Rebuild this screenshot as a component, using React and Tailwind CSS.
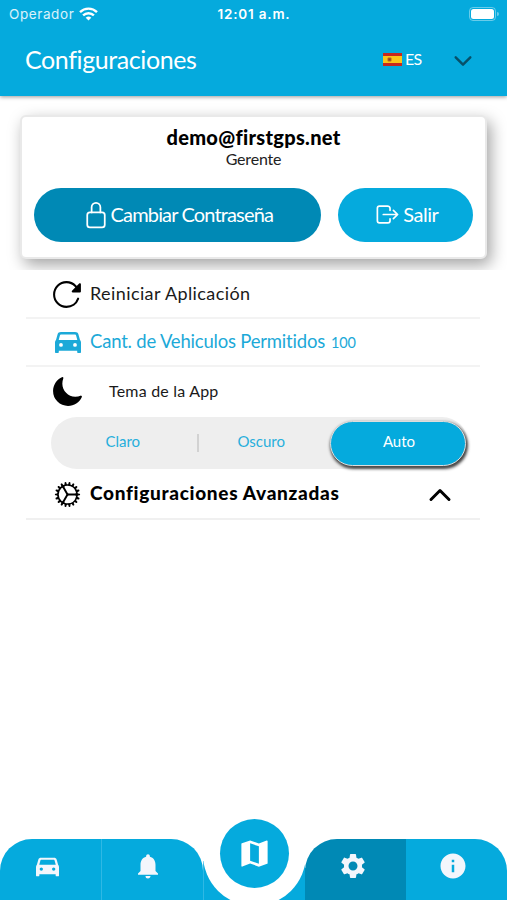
import { useState } from 'react'
import { IoLockClosedOutline, IoLogOutOutline, IoReload, IoMoon, IoCogOutline, IoChevronUp, IoChevronDown } from 'react-icons/io5'
import { MdNotifications, MdMap, MdSettings, MdInfo } from 'react-icons/md'

const CarIcon = ({ className }) => (
  <svg className={className} viewBox="0 0 26 21" fill="currentColor" fillRule="evenodd">
    <path d="M6 0h14c1.9 0 3 .7 3.4 2.3L25 8c.6.8 1 1.400 1 2.500V20c0 .6-.4 1-1 1h-1.800c-.6 0-1-.4-1-1v-1.200H3.800V20c0 .6-.4 1-1 1H1c-.6 0-1-.4-1-1v-9.500C0 9.400.4 8.800 1 8l1.600-5.700C3 .7 4.100 0 6 0zM6.400 2.400c-.9 0-1.300.3-1.500 1L3.700 7.900h18.600l-1.200-4.500c-.2-.7-.6-1-1.500-1zM6 11a1.900 1.900 0 1 0 0 3.800A1.900 1.900 0 0 0 6 11zm14 0a1.900 1.900 0 1 0 0 3.800 1.900 1.900 0 0 0 0-3.800z" />
  </svg>
)

const StatusBar = () => (
  <div className="flex h-7 items-center justify-between pl-[9px] pr-[8px] font-['Inter',sans-serif] text-[13px] leading-7 text-white">
    <div className="flex w-[150px] items-center gap-[5px]">
      <span className="text-[13.5px] tracking-[0.6px] text-white/85">Operador</span>
      <svg className="h-[14px] w-[19px]" viewBox="0 0 19 14" fill="none" stroke="currentColor" strokeWidth="2.4">
        <path d="M1 5.1a12.2 12.2 0 0 1 17 0" />
        <path d="M4.1 8.4a7.7 7.7 0 0 1 10.8 0" />
        <path d="M6.7 10.8a4 4 0 0 1 5.6 0L9.5 13.6z" fill="currentColor" stroke="none" />
      </svg>
    </div>
    <span className="text-[13.5px] font-semibold tracking-[0.8px]">12:01 a.m.</span>
    <div className="flex w-[150px] items-center justify-end gap-px pb-px">
      <div className="h-[14px] w-[27px] rounded-[4px] border border-white/40 p-px">
        <div className="h-full rounded-[2.5px] bg-white" />
      </div>
      <div className="h-1 w-[2px] rounded-r bg-white/40" />
    </div>
  </div>
)

const SpainFlag = () => (
  <svg className="h-[13px] w-[19px]" viewBox="0 0 19 13">
    <rect width="19" height="13" fill="#c8281e" />
    <rect y="3" width="19" height="7" fill="#fcc419" />
    <rect x="4.5" y="4.5" width="4" height="4" rx="1" fill="#b9651b" />
    <rect x="5.5" y="5.5" width="2" height="2" fill="#8f3b20" />
  </svg>
)

const Header = () => (
  <header className="h-24 bg-[#05aadd] shadow-[0_1px_4px_rgba(0,0,0,0.4)]">
    <StatusBar />
    <div className="flex h-[63px] items-center pl-[25px] pr-[31px] text-white">
      <h1 className="flex-1 pt-px text-[25px] tracking-[-0.4px]">Configuraciones</h1>
      <SpainFlag />
      <span className="ml-[3px] w-[18px] pb-px text-[16px] tracking-[-0.8px]">ES</span>
      <IoChevronDown className="ml-[27px] mt-[3px] h-[26px] w-[26px] text-[#075069]" />
    </div>
  </header>
)

const AccountCard = () => (
  <section className="mx-5 mt-[18px] h-[144px] rounded-[6px] border-2 border-[#e9e9e9] bg-white px-3 pt-[8px] text-center shadow-[4px_6px_16px_rgba(0,0,0,0.36)]">
    <p className="text-[20px] font-black leading-6 tracking-[0.3px] text-black">demo@firstgps.net</p>
    <p className="text-[16px] leading-5 tracking-[-0.2px] text-[#222]">Gerente</p>
    <div className="mt-[19px] flex h-[54px] gap-[17px] text-[20px] text-white">
      <button className="flex w-[288px] items-center justify-center gap-px rounded-full bg-[#0089b5] pb-px">
        <IoLockClosedOutline className="h-7 w-7" />
        <span className="pb-px tracking-[-0.85px]">Cambiar Contraseña</span>
      </button>
      <button className="flex w-[136px] items-center justify-center gap-[2px] rounded-full bg-[#05aadd] pb-px pl-[2px]">
        <IoLogOutOutline className="h-[27px] w-[27px]" />
        <span className="pb-px tracking-[-0.5px]">Salir</span>
      </button>
    </div>
  </section>
)

const themes = ['Claro', 'Oscuro', 'Auto']

const ThemePicker = () => {
  const [theme, setTheme] = useState('Auto')

  return (
    <div className="ml-[25px] flex h-[52px] w-[417px] items-center rounded-full bg-[#eee] pr-[2px]">
      {themes.map((name, i) => (
        <button
          key={name}
          onClick={() => setTheme(name)}
          className={`flex items-center justify-center pb-[3px] text-[15px] ${
            theme === name
              ? 'h-[45px] w-[136px] rounded-full border border-[#ddd] bg-[#05aadd] pl-[2px] text-white shadow-[1px_2px_3px_1px_rgba(0,0,0,0.7)]'
              : 'h-[52px] flex-1 text-[#27afdc]'
          }`}
        >
          <span className={i === 0 ? 'flex-1 pl-[6px]' : i === 1 ? 'flex-1 pl-[2px]' : 'flex-1'}>{name}</span>
          {i === 0 && <span className="mt-[3px] h-[18px] w-[2px] translate-x-[8px] bg-[#d2d2d2]" />}
        </button>
      ))}
    </div>
  )
}

const Settings = () => (
  <main className="relative ml-[26px] w-[454px] bg-white text-[#1a1a1a]">
    <div className="flex h-[49px] items-center border-b-2 border-[#f3f3f3] pl-[25px]">
      <IoReload className="mt-[2px] h-[33px] w-[33px] text-black" />
      <span className="ml-[6px] text-[18px] tracking-[0.4px]">Reiniciar Aplicación</span>
    </div>
    <div className="flex h-12 items-center border-b-2 border-[#f3f3f3] pl-[29px] text-[#1ca9d8]">
      <CarIcon className="h-[21px] w-[26px]" />
      <span className="ml-[9px] text-[18.5px] tracking-[-0.2px]">Cant. de Vehiculos Permitidos</span>
      <span className="ml-[6px] pt-[2px] text-[14.5px] tracking-[-0.2px]">100</span>
    </div>
    <div className="flex h-[50px] items-center pb-[2px] pl-[25px]">
      <IoMoon className="h-[33px] w-[33px] text-black" />
      <span className="ml-[25px] text-[16px] tracking-[0.2px]">Tema de la App</span>
    </div>
    <ThemePicker />
    <div className="flex h-[51px] items-center border-b-2 border-[#f0f0f0] pl-[26px] text-black">
      <IoCogOutline className="mt-[2px] h-[31px] w-[31px]" />
      <span className="ml-[7px] flex-1 text-[19px] font-black tracking-[0.7px]">Configuraciones Avanzadas</span>
      <IoChevronUp className="mr-[24px] mt-[2px] h-[32px] w-[32px]" />
    </div>
  </main>
)

const TabBar = () => (
  <nav className="flex h-[61px] text-[#f3f6fc]">
    <button className="flex w-[102px] justify-center rounded-tl-[32px] border-r border-[#2fb8e4] bg-[#05aadd] pr-[7px] pt-[18px]">
      <CarIcon className="h-[20px] w-[23px]" />
    </button>
    <button className="flex w-[101px] justify-center rounded-tr-[32px] bg-[#05aadd] pr-[9px] pt-[12px]">
      <MdNotifications className="h-[30px] w-[30px]" />
    </button>
    <div className="relative w-[102px]">
      {/* notch cut around the raised map button */}
      <div className="h-full overflow-hidden pt-[22px]">
        <div className="h-[39px] border-l border-[#2fb8e4] bg-[#05aadd]" />
      </div>
      <div className="absolute left-[-0.5px] top-[-36px] h-[97px] w-[103px] overflow-hidden">
        <div className="h-[103px] w-[103px] rounded-full bg-white" />
      </div>
      <button className="absolute left-[16.5px] top-[-20px] flex h-[69px] w-[69px] items-center justify-center rounded-full bg-[#05aadd] text-white">
        <MdMap className="h-[35px] w-[35px]" />
      </button>
    </div>
    <div className="w-[101px] bg-[linear-gradient(to_bottom,white_29px,#05aadd_29px)]">
      <button className="flex h-full w-full justify-center rounded-tl-[32px] bg-[#0089b5] pr-[6px] pt-[12px]">
        <MdSettings className="h-[30px] w-[30px]" />
      </button>
    </div>
    <button className="flex flex-1 justify-center rounded-tr-[32px] bg-[#05aadd] pr-[7px] pt-[12px]">
      <MdInfo className="h-[30px] w-[30px]" />
    </button>
  </nav>
)

const App = () => (
  <div className="flex h-[900px] w-[507px] flex-col overflow-hidden bg-white font-['Lato',sans-serif]">
    <Header />
    <div className="h-[174px] overflow-hidden pt-px">
      <AccountCard />
    </div>
    <Settings />
    <div className="flex-1" />
    <TabBar />
  </div>
)

export default App
